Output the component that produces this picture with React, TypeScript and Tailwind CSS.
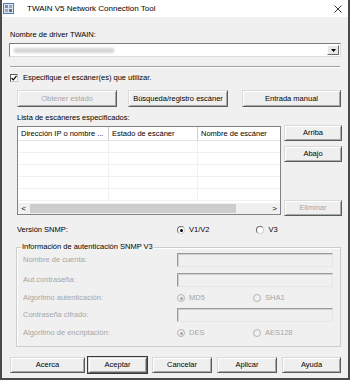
import React from "react";

const btnFace =
  "flex items-center justify-center bg-[#efefef] border border-t-[#dadada] border-l-[#dadada] border-r-[#5c5c5c] border-b-[#5c5c5c] shadow-[inset_1px_1px_0_#ffffff,inset_-1px_-1px_0_#a9a9a9]";

function Button({
  label,
  className,
  disabled,
  primary,
}: {
  label: string;
  className: string;
  disabled?: boolean;
  primary?: boolean;
}) {
  return (
    <div
      className={`${className} ${btnFace} ${primary ? "outline outline-1 outline-[#3a3a3a]" : ""} ${
        disabled ? "text-[#a6a6a6]" : "text-black"
      }`}
    >
      {label}
    </div>
  );
}

function Radio({ checked, disabled, label }: { checked?: boolean; disabled?: boolean; label: string }) {
  return (
    <div className={`flex items-center gap-[4px] ${disabled ? "text-[#a6a6a6]" : "text-black"}`}>
      <span
        className={`w-[8px] h-[8px] rounded-full border flex items-center justify-center ${
          disabled ? "border-[#b4b4b4] bg-[#f0f0f0]" : "border-t-[#6b6b6b] border-l-[#6b6b6b] border-r-[#d0d0d0] border-b-[#d0d0d0] bg-white"
        }`}
      >
        {checked && (
          <span className={`w-[3px] h-[3px] rounded-full ${disabled ? "bg-[#a6a6a6]" : "bg-black"}`} />
        )}
      </span>
      <span>{label}</span>
    </div>
  );
}

function DisabledBox() {
  return (
    <div className="w-[156px] h-[14px] bg-[#f0f0f0] border border-t-[#9a9a9a] border-l-[#9a9a9a] border-r-[#e6e6e6] border-b-[#e6e6e6] shadow-[inset_1px_1px_0_#cfcfcf]" />
  );
}

function GroupRow({ label, children, className }: { label: string; children: React.ReactNode; className: string }) {
  return (
    <div className={`flex items-center h-[14px] ${className}`}>
      <div className="w-[160px] pl-[6px] text-[#a6a6a6]">{label}</div>
      {children}
    </div>
  );
}

function TitleIcon() {
  return (
    <svg width="11" height="11" viewBox="0 0 11 11">
      <rect x="0" y="0" width="11" height="11" fill="#4f79b8" />
      <rect x="1" y="1" width="9" height="9" fill="#dfe6f1" />
      <rect x="2" y="2" width="3" height="3" fill="#7a8ea8" />
      <rect x="6" y="2" width="3" height="3" fill="#9aa8ba" />
      <rect x="2" y="6" width="3" height="3" fill="#9aa8ba" />
      <rect x="6" y="6" width="3" height="3" fill="#5f7391" />
    </svg>
  );
}

export default function App() {
  const rows = [0, 1, 2, 3, 4];
  return (
    <div className="w-[350px] h-[380px] bg-[#f0f0f0] border-x-2 border-b-2 border-[#4a4a4a] flex flex-col font-['Liberation_Sans',Arial,sans-serif] text-[7.5px] leading-[10px] text-black overflow-hidden">
      {/* title bar */}
      <div className="h-[17px] bg-white flex items-center">
        <div className="ml-[1px]">
          <TitleIcon />
        </div>
        <span className="ml-[13px] text-[8px] text-black">TWAIN V5 Network Connection Tool</span>
        <svg className="ml-auto mr-[6px]" width="8" height="8" viewBox="0 0 8 8">
          <path d="M0.5 0.5 L7.5 7.5 M7.5 0.5 L0.5 7.5" stroke="#222" strokeWidth="0.9" />
        </svg>
      </div>

      {/* driver */}
      <div className="mt-[13px] ml-[8px] h-[10px]">Nombre de driver TWAIN:</div>
      <div className="mt-[3px] ml-[7px] w-[332px] h-[14px] bg-white border border-t-[#7d7d7d] border-l-[#7d7d7d] border-r-[#dcdcdc] border-b-[#dcdcdc] flex items-center">
        <div className="ml-[4px] w-[100px] h-[5px] bg-[#d6d6d6] blur-[1px]" />
        <div className="ml-auto mr-[1px] w-[12px] h-[10px] bg-[#e8e8e8] border border-t-white border-l-white border-r-[#6a6a6a] border-b-[#6a6a6a] flex items-center justify-center">
          <svg width="5" height="3" viewBox="0 0 5 3">
            <path d="M0 0 H5 L2.5 3 Z" fill="#000" />
          </svg>
        </div>
      </div>
      <div className="mt-[9px] ml-[8px] w-[330px] h-[2px] border-t border-[#a0a0a0] border-b border-b-white" />

      {/* checkbox */}
      <div className="mt-[5px] ml-[8px] h-[10px] flex items-center gap-[5px]">
        <span className="w-[8px] h-[8px] bg-white border border-t-[#5a5a5a] border-l-[#5a5a5a] border-r-[#c8c8c8] border-b-[#c8c8c8] flex items-center justify-center">
          <svg width="6" height="6" viewBox="0 0 6 6">
            <path d="M0.6 3 L2.3 4.8 L5.5 0.8" stroke="#000" strokeWidth="1.2" fill="none" />
          </svg>
        </span>
        <span>Especifique el escáner(es) que utilizar.</span>
      </div>

      {/* action buttons */}
      <div className="mt-[7px] ml-[15px] flex h-[17px]">
        <Button label="Obtener estado" className="w-[100px] h-[17px]" disabled />
        <Button label="Búsqueda/registro escáner" className="ml-[11px] w-[100px] h-[17px]" />
        <Button label="Entrada manual" className="ml-[14px] w-[99px] h-[17px]" />
      </div>

      <div className="mt-[6px] ml-[15px] h-[10px]">Lista de escáneres especificados:</div>

      {/* list + side buttons */}
      <div className="mt-[2px] ml-[15px] flex">
        <div className="mt-[1px] w-[264px] h-[89px] bg-white border border-[#828282] flex flex-col">
          <div className="h-[14px] flex border-b border-[#e3e3e3]">
            <div className="w-[91px] border-r border-[#cfcfcf] pl-[3px] flex items-center">Dirección IP o nombre ...</div>
            <div className="w-[89px] border-r border-[#cfcfcf] pl-[3px] flex items-center">Estado de escáner</div>
            <div className="flex-1 pl-[3px] flex items-center">Nombre de escáner</div>
          </div>
          <div className="h-[62px] flex flex-col">
            {rows.map((r) => (
              <div key={r} className="h-[12px] flex border-b border-[#f0f0f0]">
                <div className="w-[91px] border-r border-[#f0f0f0]" />
                <div className="w-[89px] border-r border-[#f0f0f0]" />
                <div className="flex-1" />
              </div>
            ))}
          </div>
          <div className="h-[11px] bg-[#f0f0f0] flex items-center">
            <div className="w-[11px] text-center text-[8px] leading-[11px]">&lt;</div>
            <div className="ml-[1px] w-[206px] h-[9px] bg-[#cdcdcd]" />
            <div className="ml-auto w-[11px] text-center text-[8px] leading-[11px]">&gt;</div>
          </div>
        </div>
        <div className="ml-[3px] flex flex-col">
          <Button label="Arriba" className="w-[58px] h-[16px]" />
          <Button label="Abajo" className="mt-[5px] w-[58px] h-[16px]" />
          <Button label="Eliminar" className="mt-[38px] w-[58px] h-[16px]" disabled />
        </div>
      </div>

      {/* SNMP version */}
      <div className="mt-[9px] ml-[15px] h-[10px] flex items-center">
        <div className="w-[160px]">Versión SNMP:</div>
        <Radio checked label="V1/V2" />
        <div className="ml-[47px]">
          <Radio label="V3" />
        </div>
      </div>

      {/* SNMP V3 group */}
      <fieldset className="mt-[7px] ml-[14px] w-[325px] h-[105px] border border-[#cdcdcd] shadow-[inset_1px_1px_0_#ffffff] px-0">
        <legend className="ml-[4px] px-[1px] leading-[10px]">Información de autenticación SNMP V3</legend>
        <GroupRow label="Nombre de cuenta:" className="mt-[1px]">
          <DisabledBox />
        </GroupRow>
        <GroupRow label="Aut.contraseña:" className="mt-[6px]">
          <DisabledBox />
        </GroupRow>
        <GroupRow label="Algoritmo autenticación:" className="mt-[4px]">
          <div className="w-[76px]">
            <Radio checked disabled label="MD5" />
          </div>
          <Radio disabled label="SHA1" />
        </GroupRow>
        <GroupRow label="Contraseña cifrado:" className="mt-[3px]">
          <DisabledBox />
        </GroupRow>
        <GroupRow label="Algoritmo de encriptación:" className="mt-[4px]">
          <div className="w-[76px]">
            <Radio checked disabled label="DES" />
          </div>
          <Radio disabled label="AES128" />
        </GroupRow>
      </fieldset>

      {/* dialog buttons */}
      <div className="mt-[10px] ml-[8px] flex h-[16px]">
        <Button label="Acerca" className="w-[75px] h-[16px]" />
        <Button label="Aceptar" className="ml-[3px] w-[59px] h-[16px]" primary />
        <Button label="Cancelar" className="ml-[5px] w-[60px] h-[16px]" />
        <Button label="Aplicar" className="ml-[5px] w-[60px] h-[16px]" />
        <Button label="Ayuda" className="ml-[5px] w-[59px] h-[16px]" />
      </div>
    </div>
  );
}
